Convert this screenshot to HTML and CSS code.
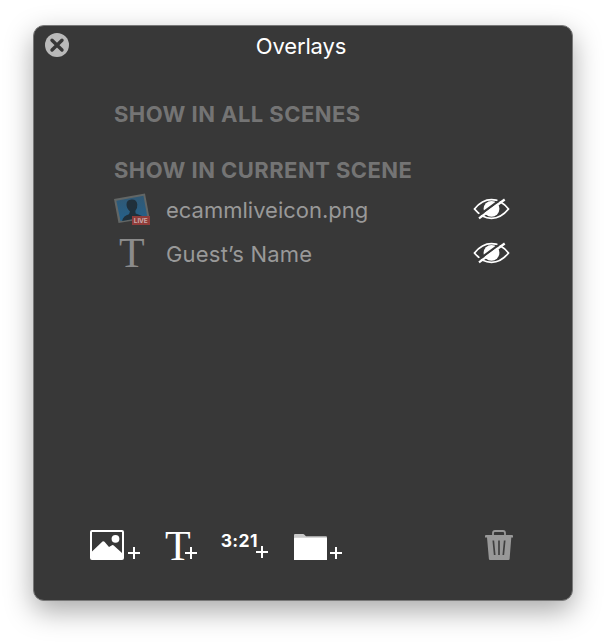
FILE: index.html
```html
<!DOCTYPE html>
<html lang="en">
<head>
<meta charset="utf-8">
<title>Overlays</title>
<link rel="stylesheet" href="styles.css">
</head>
<body>
<svg width="0" height="0" class="defs">
  <symbol id="hidden-eye" viewBox="0 0 38 24">
    <path d="M1.5 12Q9 2.700 18.500 2.700T35.500 12Q28 21.300 18.500 21.300T1.500 12Z" fill="none" stroke="#fff" stroke-width="1.800"/>
    <circle cx="18.500" cy="11.800" r="7.900" fill="#fff"/>
    <path d="M4.500 19.500L30 .8" stroke="#383838" stroke-width="2.200"/>
    <path d="M6 21.300L31.700 2.500" stroke="#fff" stroke-width="2.200"/>
  </symbol>
  <symbol id="plus" viewBox="0 0 12 12">
    <path d="M6 0V12M0 6H12" stroke="#fff" stroke-width="2"/>
  </symbol>
</svg>
<main class="panel">
  <header class="titlebar">
    <button class="close" aria-label="Close">
      <svg width="24" height="24" viewBox="0 0 24 24"><circle cx="12" cy="12" r="12" fill="#bababa"/><path d="M7 7.200L17 17M17 7.200L7 17" stroke="#383838" stroke-width="3.400" stroke-linecap="round"/></svg>
    </button>
    <h1>Overlays</h1>
  </header>
  <section class="list">
    <h2 class="all">SHOW IN ALL SCENES</h2>
    <h2 class="current">SHOW IN CURRENT SCENE</h2>
    <div class="row">
      <svg class="thumb" width="38" height="34" viewBox="0 0 38 34">
        <defs><linearGradient id="sky" x2="0" y2="1"><stop stop-color="#315873"/><stop offset="1" stop-color="#24618b"/></linearGradient></defs>
        <path d="M0 6L31 .5L35.500 25L4.500 30Z" fill="#626665"/>
        <path d="M2.300 7.700L29.500 2.800L33.300 23.500L6.500 28Z" fill="url(#sky)"/>
        <path d="M8 28Q9.500 22.500 15 21.200L16 18.500Q12.300 15 12.500 11.300Q12.700 6.800 17.500 6.500Q22.700 6.100 23.300 11.500Q23.600 15.500 21.300 18L21.700 20.400L30.700 23.900Z" fill="#20303b"/>
        <rect x="18" y="23" width="18" height="9" fill="#913c3a"/>
        <text x="19.800" y="29.800" class="live" textLength="14">LIVE</text>
      </svg>
      <span class="name file">ecammliveicon.png</span>
      <svg class="eye" width="38" height="24"><use href="#hidden-eye"/></svg>
    </div>
    <div class="row">
      <span class="letter">T</span>
      <span class="name guest">Guest’s Name</span>
      <svg class="eye" width="38" height="24"><use href="#hidden-eye"/></svg>
    </div>
  </section>
  <footer class="toolbar">
    <button class="tool image" aria-label="Add image">
      <svg width="34" height="30" viewBox="0 0 34 30"><rect x="1" y="1" width="32" height="28" rx="1" fill="none" stroke="#fff" stroke-width="2"/><path d="M2 21.500L12.500 11.500Q13.500 10.800 14.500 11.800L19 17L22 15.300Q23 14.800 24 15.700L32 23V29H2Z" fill="#fff"/><circle cx="25.500" cy="8.800" r="3.900" fill="#fff"/></svg>
      <svg class="plus" width="12" height="12"><use href="#plus"/></svg>
    </button>
    <button class="tool text" aria-label="Add text">
      <span class="letter">T</span>
      <svg class="plus" width="12" height="12"><use href="#plus"/></svg>
    </button>
    <button class="tool timer" aria-label="Add timer">
      <span class="digits">3:21</span>
      <svg class="plus" width="12" height="12"><use href="#plus"/></svg>
    </button>
    <button class="tool folder" aria-label="Add folder">
      <svg width="33" height="26" viewBox="0 0 33 26"><path d="M0 5V1Q0 0 1 0H9Q10 0 10.700 1L12 2.200H32Q33 2.200 33 3.200V5Z" fill="#c9c9c9"/><path d="M0 4.300Q0 3.800 1 3.800H32Q33 3.800 33 4.800V26H0Z" fill="#fff"/></svg>
      <svg class="plus" width="12" height="12"><use href="#plus"/></svg>
    </button>
    <button class="tool trash" aria-label="Delete">
      <svg width="28" height="30" viewBox="0 0 28 30"><path d="M8 6V3Q8 1 10 1H18Q20 1 20 3V6" fill="none" stroke="#989898" stroke-width="1.800"/><path d="M1 5H27Q28 5 28 6V7.500H26.300L24.600 29Q24.500 30 23.500 30H5Q4 30 3.900 29L2 7.500H0V6Q0 5 1 5Z" fill="#989898"/><path d="M8.300 10.500L9.700 25M14 10.500V25M19.700 10.500L18.300 25" stroke="#404040" stroke-width="1.700"/></svg>
    </button>
  </footer>
</main>
</body>
</html>
```

FILE: styles.css
```css
* { box-sizing: border-box; }
body {
  margin: 0;
  width: 606px;
  height: 642px;
  padding: 25px 33px 41px;
  overflow: hidden;
  background: #fff;
  font-family: Inter, "Liberation Sans", sans-serif;
}
.defs { display: none; }
.panel {
  display: flex;
  flex-direction: column;
  width: 540px;
  height: 576px;
  border: 1px solid #787878;
  border-radius: 11px;
  background: #383838;
  box-shadow: 0 10px 28px rgba(0, 0, 0, .34);
}
button { padding: 0; border: 0; background: none; color: inherit; font: inherit; }
svg { display: block; flex: none; }
.titlebar {
  display: grid;
  grid-template-columns: 58px 1fr 62px;
  height: 42px;
}
.close { width: 24px; height: 24px; margin: 7px 0 0 11px; }
h1, h2 { margin: 0; font-size: 22px; line-height: 28px; white-space: nowrap; }
h1 { margin-top: 6px; color: #fff; font-weight: 400; text-align: center; letter-spacing: -.15px; }
.list { flex: 1; padding: 32px 60px 0 80px; }
h2 { height: 28px; color: #747474; font-weight: 700; letter-spacing: .45px; }
.current { margin-top: 28px; }
.row {
  display: grid;
  grid-template-columns: 52px 1fr 38px;
  height: 44px;
  color: #999;
}
.row:first-of-type { margin-top: 2px; }
.thumb { margin-top: 7px; }
.live { fill: #c5aaaa; font-size: 6.500px; font-weight: 700; }
.name { padding-top: 10px; font-size: 22px; line-height: 28px; white-space: nowrap; }
.guest { letter-spacing: .2px; }
.eye { margin: 11px 0 0 -1px; }
.letter { font-family: "Liberation Serif", serif; font-size: 42px; line-height: 44px; }
.row .letter { padding: 1px 0 0 5px; color: #8b8b8b; }
.toolbar {
  display: flex;
  align-items: flex-start;
  height: 70px;
  padding: 0 59px 0 56px;
  color: #fff;
}
.tool { display: flex; align-items: flex-start; }
.image .plus { margin: 17px 0 0 4px; }
.text { margin-left: 25px; }
.text .letter { margin-top: -6px; }
.text .plus { margin: 17px 0 0 -6px; }
.timer { margin-left: 24px; }
.digits { font-size: 17.500px; font-weight: 700; line-height: 22px; letter-spacing: .4px; }
.timer .plus { margin: 16px 0 0 -2px; }
.folder { margin-left: 26px; padding-top: 4px; }
.folder .plus { margin: 13px 0 0 3px; }
.trash { margin-left: auto; }
```
